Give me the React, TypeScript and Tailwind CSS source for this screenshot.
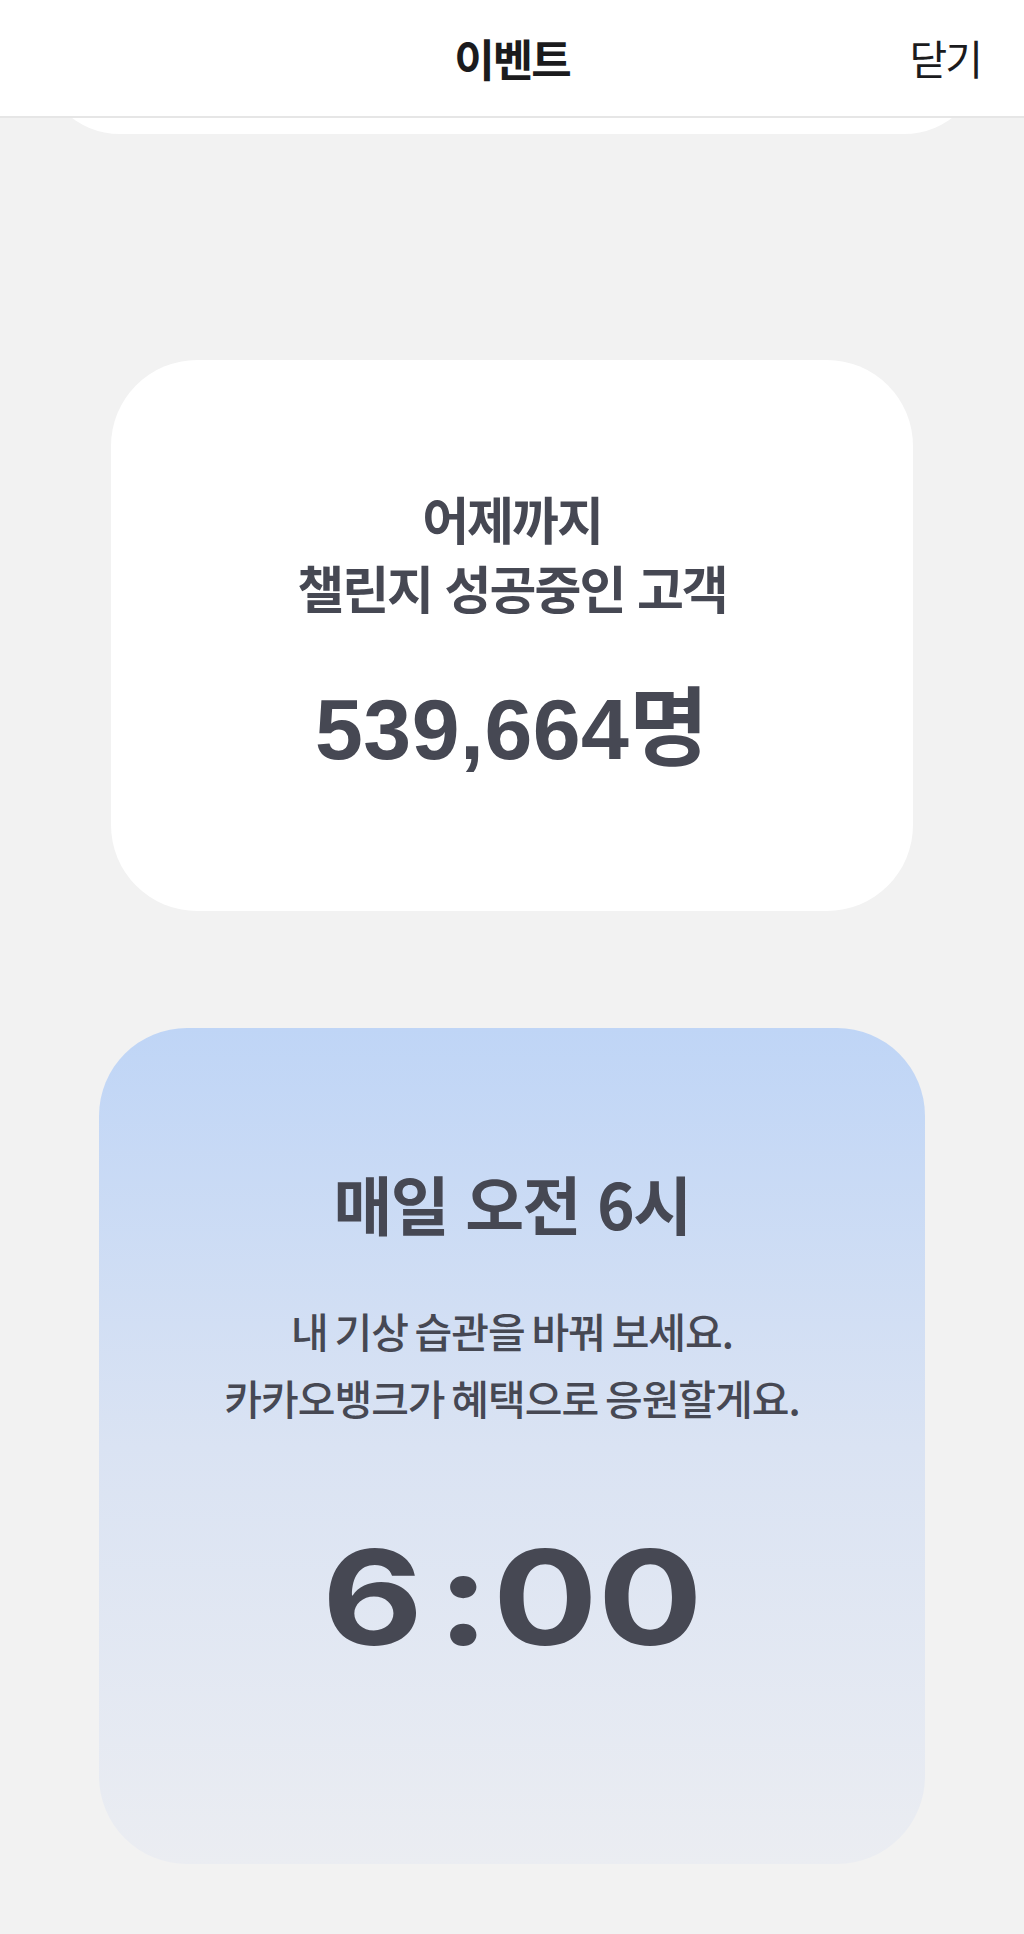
import React from "react";

const kr = "font-['Noto_Sans_CJK_KR','Noto_Sans',sans-serif]";

function Header() {
  return (
    <header className="absolute inset-x-0 top-0 z-10 flex h-[118px] items-center justify-center border-b-2 border-[#e6e6e6] bg-white">
      <h1 className={`${kr} text-[44px] font-bold tracking-[-2px] text-[#1b1b1d]`}>이벤트</h1>
      <button className={`${kr} absolute right-[43px] top-1/2 -translate-y-1/2 text-[41px] font-normal tracking-[-2px] text-[#1b1b1d]`}>
        닫기
      </button>
    </header>
  );
}

function ChallengeCount() {
  return (
    <section className="mx-[111px] mt-[226px] flex h-[551px] flex-col items-center rounded-[86px] bg-white pt-[124px] text-[#464853]">
      <p className={`${kr} text-center text-[51px] font-bold leading-[69px] tracking-[-2px] [word-spacing:3px]`}>
        어제까지
        <br />
        챌린지 성공중인 고객
      </p>
      <p className="mt-[64px] font-['Liberation_Sans','Noto_Sans_CJK_KR',sans-serif] text-[86px] font-bold leading-none tracking-[0.5px]">
        539,664명
      </p>
    </section>
  );
}

function WakeUpCard() {
  return (
    <section className="mx-[99px] mt-[117px] flex h-[836px] flex-col items-center rounded-[88px] bg-gradient-to-b from-[#bfd5f6] via-[#dae3f3] to-[#ebedf2] pt-[136px] text-[#464853]">
      <h2 className={`${kr} text-[64px] font-bold leading-[76px] tracking-[-1.5px] [word-spacing:4px]`}>매일 오전 6시</h2>
      <p className={`${kr} mt-[57px] text-center text-[41px] font-medium leading-[67px] tracking-[-1px] [word-spacing:-1.5px]`}>
        내 기상 습관을 바꿔 보세요.
        <br />
        카카오뱅크가 혜택으로 응원할게요.
      </p>
      <div className="mt-[100px] flex scale-x-[1.18] font-['Inter',sans-serif] text-[132px] font-bold leading-none">
        <span>6</span>
        <span className="ml-[12px] mr-[3px]">:</span>
        <span>00</span>
      </div>
    </section>
  );
}

export default function App() {
  return (
    <div className="relative min-h-[1934px] overflow-hidden bg-[#f2f2f2]">
      <Header />
      <main className="flex flex-col pb-[70px]">
        <div className="mx-[40px] mt-[-100px] h-[234px] rounded-[80px] bg-white" />
        <ChallengeCount />
        <WakeUpCard />
      </main>
    </div>
  );
}
